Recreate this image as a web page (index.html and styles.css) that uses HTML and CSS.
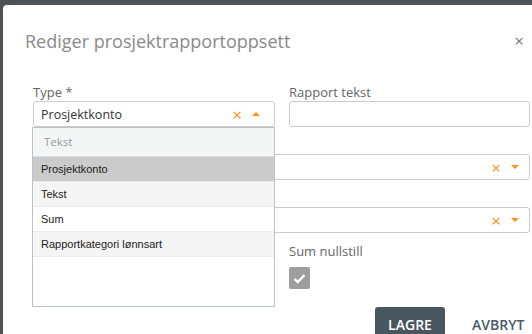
FILE: index.html
```html
<!DOCTYPE html>
<html lang="no">
<head>
    <meta charset="UTF-8">
    <title>Rediger prosjektrapportoppsett</title>
    <link rel="stylesheet" href="styles.css">
</head>
<body>
    <div class="modal">
        <header class="modal-header">
            <h1>Rediger prosjektrapportoppsett</h1>
            <span class="close">&times;</span>
        </header>
        <form class="modal-body">
            <div class="field">
                <label>Type *</label>
                <div class="select is-open">
                    <span class="select-value">Prosjektkonto</span>
                    <span class="clear">&times;</span>
                    <span class="arrow up"></span>
                </div>
                <div class="dropdown">
                    <div class="search">Tekst</div>
                    <ul>
                        <li class="active">Prosjektkonto</li>
                        <li class="alt">Tekst</li>
                        <li>Sum</li>
                        <li class="alt">Rapportkategori lønnsart</li>
                    </ul>
                </div>
            </div>
            <div class="field">
                <label>Rapport tekst</label>
                <input type="text">
            </div>
            <div class="field wide">
                <label></label>
                <div class="select">
                    <span class="select-value"></span>
                    <span class="clear">&times;</span>
                    <span class="arrow"></span>
                </div>
            </div>
            <div class="field wide">
                <label></label>
                <div class="select">
                    <span class="select-value"></span>
                    <span class="clear">&times;</span>
                    <span class="arrow"></span>
                </div>
            </div>
            <div class="field">
                <label></label>
            </div>
            <div class="field">
                <label>Sum nullstill</label>
                <span class="checkbox">
                    <svg width="13" height="11" viewBox="0 0 13 11"><path d="M1.5 5.8 L4.8 9 L11.5 2" fill="none" stroke="#fff" stroke-width="2.4"/></svg>
                </span>
            </div>
        </form>
        <footer class="modal-footer">
            <button type="button" class="btn-primary">Lagre</button>
            <button type="button" class="btn-link">Avbryt</button>
        </footer>
    </div>
</body>
</html>
```

FILE: styles.css
```css
body {
    margin: 0;
    background: #4d5257;
    font-family: "Open Sans", Arial, sans-serif;
    overflow: hidden;
    height: 334px;
}
.modal {
    margin: 5px 0 0 3px;
    width: 545px;
    height: 340px;
    background: #fff;
    border-radius: 4px;
}
.modal-header {
    display: flex;
    align-items: center;
    padding: 24px 0 0 22px;
}
h1 {
    margin: 0;
    font-size: 18px;
    font-weight: normal;
    line-height: 24px;
    color: #8a8a8a;
}
.close {
    margin-left: auto;
    margin-right: 24px;
    font-size: 17px;
    color: #777;
    line-height: 24px;
}
.modal-body {
    display: grid;
    grid-template-columns: 242px 241px;
    column-gap: 14px;
    padding: 30px 0 0 30px;
}
.field {
    position: relative;
    margin-bottom: 9px;
}
.field.wide {
    grid-column: 1 / 3;
}
label {
    display: block;
    min-height: 18px;
    font-size: 13px;
    line-height: 18px;
    color: #666;
}
input[type="text"],
.select {
    box-sizing: border-box;
    width: 100%;
    height: 26px;
    border: 1px solid #ccc;
    border-radius: 3px;
}
.select {
    display: flex;
    align-items: center;
    padding: 0 10px 0 7px;
}
.select.is-open {
    padding-right: 14px;
}
.select-value {
    flex: 1;
    font-size: 12.5px;
    color: #333;
}
.clear {
    color: #f7931e;
    font-size: 17px;
    line-height: 15px;
    margin-right: 10px;
}
.arrow {
    width: 0;
    height: 0;
    border-left: 4px solid transparent;
    border-right: 4px solid transparent;
    border-top: 4px solid #f7931e;
}
.arrow.up {
    border-top: none;
    border-bottom: 4px solid #f7931e;
}
.dropdown {
    position: absolute;
    top: 44px;
    left: -1px;
    width: 243px;
    height: 180px;
    box-sizing: border-box;
    background: #fff;
    border: 1px solid #bcc2c8;
    z-index: 2;
}
.search {
    height: 28px;
    line-height: 28px;
    padding-left: 11px;
    background: #f4f6f6;
    border-bottom: 1px solid #dde0e2;
    font-size: 11.5px;
    color: #999;
}
.dropdown ul {
    list-style: none;
    margin: 0;
    padding: 0;
}
.dropdown li {
    height: 24px;
    line-height: 24px;
    padding-left: 8px;
    border-bottom: 1px solid #ebebeb;
    font-family: "Liberation Sans", Arial, sans-serif;
    font-size: 11px;
    color: #222;
}
.dropdown li.alt {
    background: #f5f5f5;
}
.dropdown li.active {
    background: #cbcbcb;
}
.checkbox {
    display: flex;
    align-items: center;
    justify-content: center;
    width: 21px;
    height: 22px;
    margin-top: 7px;
    background: #9e9e9e;
    border-radius: 2px;
}
.modal-footer {
    display: flex;
    align-items: flex-start;
    padding: 9px 0 0 372px;
}
.btn-primary {
    width: 70px;
    height: 34px;
    border: none;
    border-radius: 3px;
    background: #47565f;
    color: #fff;
    font-family: "Open Sans", Arial, sans-serif;
    font-size: 14px;
    font-weight: 600;
    text-transform: uppercase;
    padding: 0;
}
.btn-link {
    margin-left: 27px;
    height: 34px;
    border: none;
    background: none;
    color: #4a5a66;
    font-family: "Open Sans", Arial, sans-serif;
    font-size: 14px;
    font-weight: 600;
    text-transform: uppercase;
    padding: 0;
}
```
